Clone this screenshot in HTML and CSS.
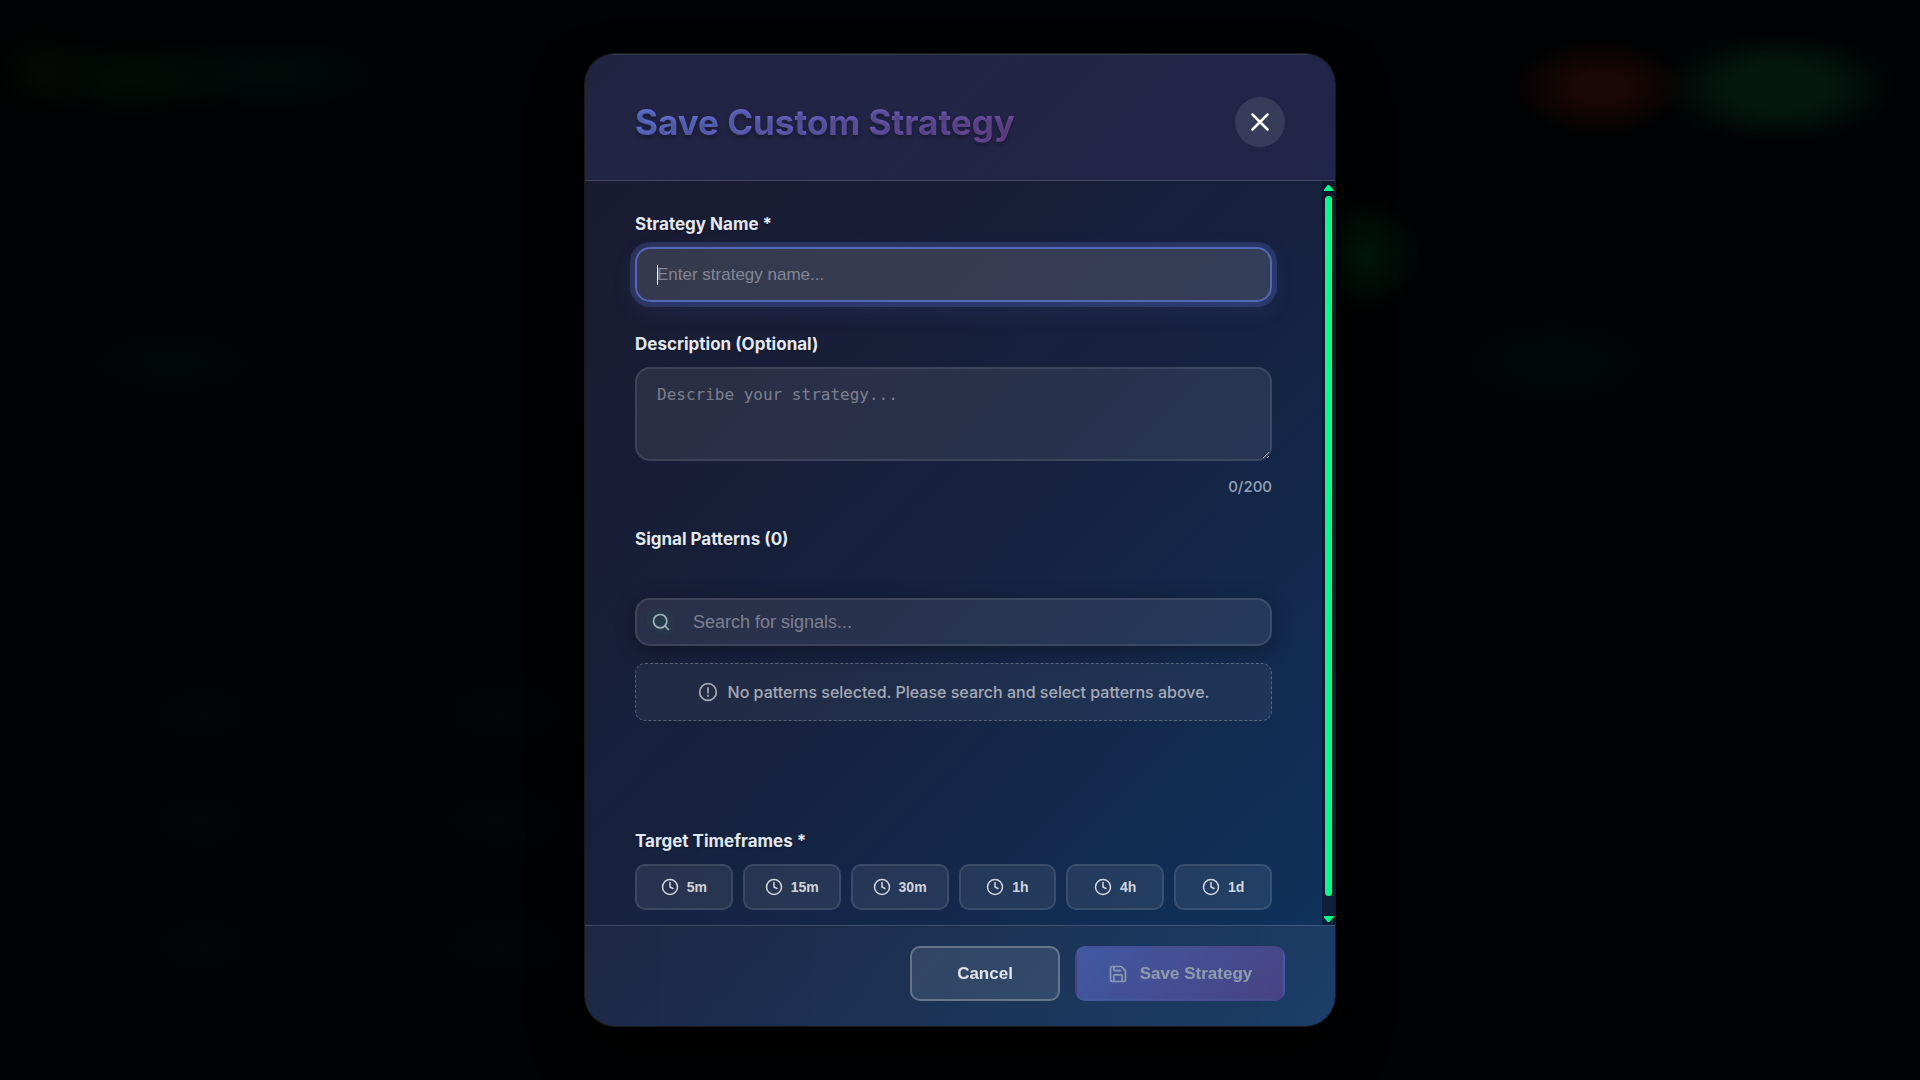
FILE: index.html
```html
<!DOCTYPE html>
<html lang="en">
<head>
  <meta charset="UTF-8">
  <meta name="viewport" content="width=device-width, initial-scale=1.0">
  <title>Save Custom Strategy</title>
  <link rel="stylesheet" href="styles.css">
</head>
<body>
  <!-- shared icons -->
  <svg class="sprite" aria-hidden="true">
    <symbol id="icon-clock" viewBox="0 0 24 24">
      <circle cx="12" cy="12" r="10"/>
      <polyline points="12 6 12 12 16 14"/>
    </symbol>
  </svg>

  <div class="overlay">
    <form class="modal" role="dialog" aria-labelledby="modal-title" onsubmit="return false">
      <header class="modal-header">
        <h2 id="modal-title">Save Custom Strategy</h2>
        <button type="button" class="close-btn" aria-label="Close">
          <svg class="icon" width="30" height="30" viewBox="0 0 24 24"><path d="M18 6 6 18M6 6l12 12"/></svg>
        </button>
      </header>

      <div class="modal-main">
        <div class="modal-body">
          <div class="field">
            <label for="strategy-name">Strategy Name *</label>
            <input type="text" id="strategy-name" class="text-input" placeholder="Enter strategy name..." autofocus>
          </div>

          <div class="field">
            <label for="description">Description (Optional)</label>
            <textarea id="description" class="text-input" maxlength="200" placeholder="Describe your strategy..."></textarea>
            <div class="char-count">0/200</div>
          </div>

          <div class="field patterns">
            <label for="signal-search">Signal Patterns (0)</label>
            <div class="search-box">
              <svg class="icon search-icon" width="20" height="20" viewBox="0 0 24 24"><circle cx="11" cy="11" r="8"/><path d="m21 21-4.3-4.3"/></svg>
              <input type="text" id="signal-search" placeholder="Search for signals...">
            </div>
            <div class="no-patterns">
              <svg class="icon" width="20" height="20" viewBox="0 0 24 24"><circle cx="12" cy="12" r="10"/><path d="M12 7v6M12 16v1"/></svg>
              <span>No patterns selected. Please search and select patterns above.</span>
            </div>
          </div>

          <div class="field">
            <div class="label" id="timeframes-label">Target Timeframes *</div>
            <div class="timeframes" role="group" aria-labelledby="timeframes-label">
              <button type="button" class="timeframe"><svg class="icon" width="18" height="18"><use href="#icon-clock"/></svg>5m</button>
              <button type="button" class="timeframe"><svg class="icon" width="18" height="18"><use href="#icon-clock"/></svg>15m</button>
              <button type="button" class="timeframe"><svg class="icon" width="18" height="18"><use href="#icon-clock"/></svg>30m</button>
              <button type="button" class="timeframe"><svg class="icon" width="18" height="18"><use href="#icon-clock"/></svg>1h</button>
              <button type="button" class="timeframe"><svg class="icon" width="18" height="18"><use href="#icon-clock"/></svg>4h</button>
              <button type="button" class="timeframe"><svg class="icon" width="18" height="18"><use href="#icon-clock"/></svg>1d</button>
            </div>
          </div>
        </div>

        <div class="scroll-rail" aria-hidden="true">
          <span class="arrow-up"></span>
          <span class="thumb"></span>
          <span class="arrow-down"></span>
        </div>
      </div>

      <footer class="modal-footer">
        <button type="button" class="btn btn-cancel">Cancel</button>
        <button type="submit" class="btn btn-save" disabled>
          <svg class="icon" width="20" height="20" viewBox="0 0 24 24"><path d="M15.2 3a2 2 0 0 1 1.4.6l3.8 3.8a2 2 0 0 1 .6 1.4V19a2 2 0 0 1-2 2H5a2 2 0 0 1-2-2V5a2 2 0 0 1 2-2z"/><path d="M17 21v-7a1 1 0 0 0-1-1H8a1 1 0 0 0-1 1v7M7 3v4a1 1 0 0 0 1 1h7"/></svg>
          Save Strategy
        </button>
      </footer>
    </form>
  </div>
</body>
</html>
```
FILE: styles.css
```css
* { box-sizing: border-box; }

body {
  margin: 0;
  background: #000203;
  color: #fff;
  font-family: Inter, "Liberation Sans", sans-serif;
}

input, button { font-family: "Liberation Sans", Arial, sans-serif; }
button { cursor: pointer; }

.sprite {
  position: absolute;
  width: 0;
  height: 0;
}

.icon {
  flex: none;
  fill: none;
  stroke: currentColor;
  stroke-width: 2;
  stroke-linecap: round;
  stroke-linejoin: round;
}

/* Dimmed page glow behind the dialog */
.overlay {
  display: flex;
  align-items: center;
  justify-content: center;
  min-height: 100vh;
  background:
    radial-gradient(90px 50px at 83.3% 8.1%, #1a0606 30%, transparent),
    radial-gradient(120px 56px at 92.6% 8.1%, #04180f 40%, transparent),
    radial-gradient(60px 60px at 71% 23.6%, #00180b, transparent),
    radial-gradient(60px 50px at 2.3% 6.5%, #050803, transparent),
    radial-gradient(110px 44px at 7% 7.2%, #010d06, transparent),
    radial-gradient(140px 44px at 14% 6.8%, #020a08, transparent),
    radial-gradient(130px 50px at 9% 33.5%, #02070a, transparent),
    radial-gradient(130px 60px at 81% 33.5%, #02080a, transparent),
    radial-gradient(70px 40px at 10.5% 66%, #040506, transparent),
    radial-gradient(80px 40px at 26% 66%, #040506, transparent),
    radial-gradient(70px 40px at 10.5% 76%, #040506, transparent),
    radial-gradient(80px 40px at 26% 76%, #040506, transparent),
    radial-gradient(70px 40px at 10.5% 87.5%, #040506, transparent),
    radial-gradient(80px 40px at 26% 87.5%, #040506, transparent);
}

/* Modal */
.modal {
  display: flex;
  flex-direction: column;
  width: 90%;
  max-width: 750px;
  height: 90vh;
  overflow: hidden;
  border-radius: 30px;
  background: linear-gradient(135deg, #1a1a2e 0%, #16213e 50%, #0f3460 100%);
  box-shadow:
    0 0 0 1px rgba(255, 255, 255, 0.1),
    0 25px 50px rgba(0, 0, 0, 0.8);
}

.modal-header {
  display: flex;
  align-items: center;
  justify-content: space-between;
  padding: 43px 50px 33px;
  background: linear-gradient(135deg, rgba(102, 126, 234, 0.1), rgba(118, 75, 162, 0.1));
  border-bottom: 1px solid rgba(255, 255, 255, 0.15);
  box-shadow: inset 0 1px 0 rgba(255, 255, 255, 0.1);
}

.modal-header h2 {
  margin: 0;
  font-size: 35px;
  font-weight: 700;
  line-height: 44px;
  color: transparent;
  background: linear-gradient(135deg, #667eea, #764ba2);
  -webkit-background-clip: text;
  background-clip: text;
  text-shadow: 0 2px 4px rgba(0, 0, 0, 0.3);
}

.close-btn {
  display: flex;
  align-items: center;
  justify-content: center;
  width: 50px;
  height: 50px;
  padding: 0;
  border: none;
  border-radius: 50%;
  background: rgba(255, 255, 255, 0.1);
  color: #fff;
}

.modal-main {
  display: flex;
  flex: 1;
  min-height: 0;
}

.modal-body {
  flex: 1;
  overflow-y: auto;
  scrollbar-width: none;
  padding: 31px 50px 30px;
}

/* Green scroll rail */
.scroll-rail {
  display: flex;
  flex-direction: column;
  align-items: center;
  width: 13px;
  padding: 4px 0 3px;
  background: rgba(15, 20, 35, 0.6);
}

.thumb {
  flex: 1;
  width: 7px;
  margin: 5px 0 20px;
  border-radius: 4px;
  background: #00ff88;
}

.arrow-up,
.arrow-down {
  width: 9px;
  height: 6px;
  background: #00ff88;
}

.arrow-up { clip-path: polygon(40% 0, 60% 0, 100% 75%, 100% 100%, 0 100%, 0 75%); }
.arrow-down { clip-path: polygon(0 0, 100% 0, 100% 25%, 60% 100%, 40% 100%, 0 25%); }

/* Fields */
.field { margin-bottom: 30px; }
.field:last-child { margin-bottom: 0; }

.field label,
.field .label {
  display: block;
  margin-bottom: 11px;
  font-size: 17px;
  font-weight: 700;
  line-height: 24px;
  color: #e2e8f0;
  text-shadow: 0 1px 2px rgba(0, 0, 0, 0.3);
}

.text-input {
  display: block;
  width: 100%;
  padding: 16px 20px;
  border: 2px solid rgba(255, 255, 255, 0.1);
  border-radius: 15px;
  outline: none;
  background: rgba(255, 255, 255, 0.08);
  color: #fff;
  font-size: 17px;
}

input.text-input { height: 55px; }

textarea.text-input {
  height: 94px;
  resize: vertical;
  font-family: "DejaVu Sans Mono", monospace;
  font-size: 16px;
}

.text-input::placeholder,
.search-box input::placeholder { color: rgba(255, 255, 255, 0.4); }

.text-input:focus {
  border-color: #5468b8;
  background-color: rgba(255, 255, 255, 0.13);
  box-shadow: 0 0 0 5px rgba(102, 126, 234, 0.22), 0 8px 25px rgba(102, 126, 234, 0.12);
}

/* steady caret while the field is empty */
input.text-input:focus:placeholder-shown {
  caret-color: transparent;
  background-image: linear-gradient(#fff, #fff);
  background-position: 20px center;
  background-size: 1px 20px;
  background-repeat: no-repeat;
}

.char-count {
  margin-top: 16px;
  font-size: 15px;
  font-weight: 500;
  line-height: 20px;
  text-align: right;
  color: #94a3b8;
}

/* Signal search */
.patterns { margin-bottom: 108px; }

.search-box {
  display: flex;
  align-items: center;
  gap: 22px;
  height: 48px;
  margin-top: 47px;
  padding: 0 14px;
  border: 2px solid rgba(255, 255, 255, 0.1);
  border-radius: 15px;
  background: rgba(255, 255, 255, 0.08);
  box-shadow: 0 4px 20px rgba(0, 0, 0, 0.3);
}

.search-icon {
  color: #a5b3bd;
  filter: drop-shadow(0 0 4px rgba(0, 255, 136, 0.3));
}

.search-box input {
  flex: 1;
  min-width: 0;
  padding: 0;
  border: none;
  outline: none;
  background: none;
  color: #fff;
  font-size: 18px;
}

.no-patterns {
  display: flex;
  align-items: center;
  justify-content: center;
  gap: 10px;
  height: 58px;
  margin-top: 17px;
  border: 1px dashed rgba(255, 255, 255, 0.25);
  border-radius: 10px;
  background: rgba(255, 255, 255, 0.05);
  color: rgba(255, 255, 255, 0.6);
  font-size: 16px;
  font-weight: 500;
}

/* Timeframes */
.timeframes {
  display: grid;
  grid-template-columns: repeat(6, 1fr);
  gap: 10px;
}

.timeframe {
  display: flex;
  align-items: center;
  justify-content: center;
  gap: 8px;
  height: 46px;
  padding: 0;
  border: 2px solid rgba(255, 255, 255, 0.1);
  border-radius: 10px;
  background: rgba(255, 255, 255, 0.08);
  color: rgba(255, 255, 255, 0.8);
  font-size: 14px;
  font-weight: 700;
}

/* Footer */
.modal-footer {
  display: flex;
  justify-content: flex-end;
  gap: 15px;
  padding: 20px 50px 25px;
  border-top: 1px solid rgba(255, 255, 255, 0.15);
  background: linear-gradient(90deg, rgba(255, 255, 255, 0.03), rgba(255, 255, 255, 0.05));
}

.btn {
  display: flex;
  align-items: center;
  justify-content: center;
  gap: 12px;
  height: 55px;
  min-width: 150px;
  padding: 0 30px;
  border: 2px solid transparent;
  border-radius: 10px;
  font-size: 17px;
  font-weight: 700;
}

.btn-cancel {
  border-color: rgba(255, 255, 255, 0.25);
  background: rgba(255, 255, 255, 0.1);
  color: rgba(255, 255, 255, 0.85);
}

.btn-save {
  min-width: 210px;
  background: linear-gradient(135deg, #667eea, #764ba2);
  color: #fff;
  opacity: 0.5;
  cursor: not-allowed;
}
```
